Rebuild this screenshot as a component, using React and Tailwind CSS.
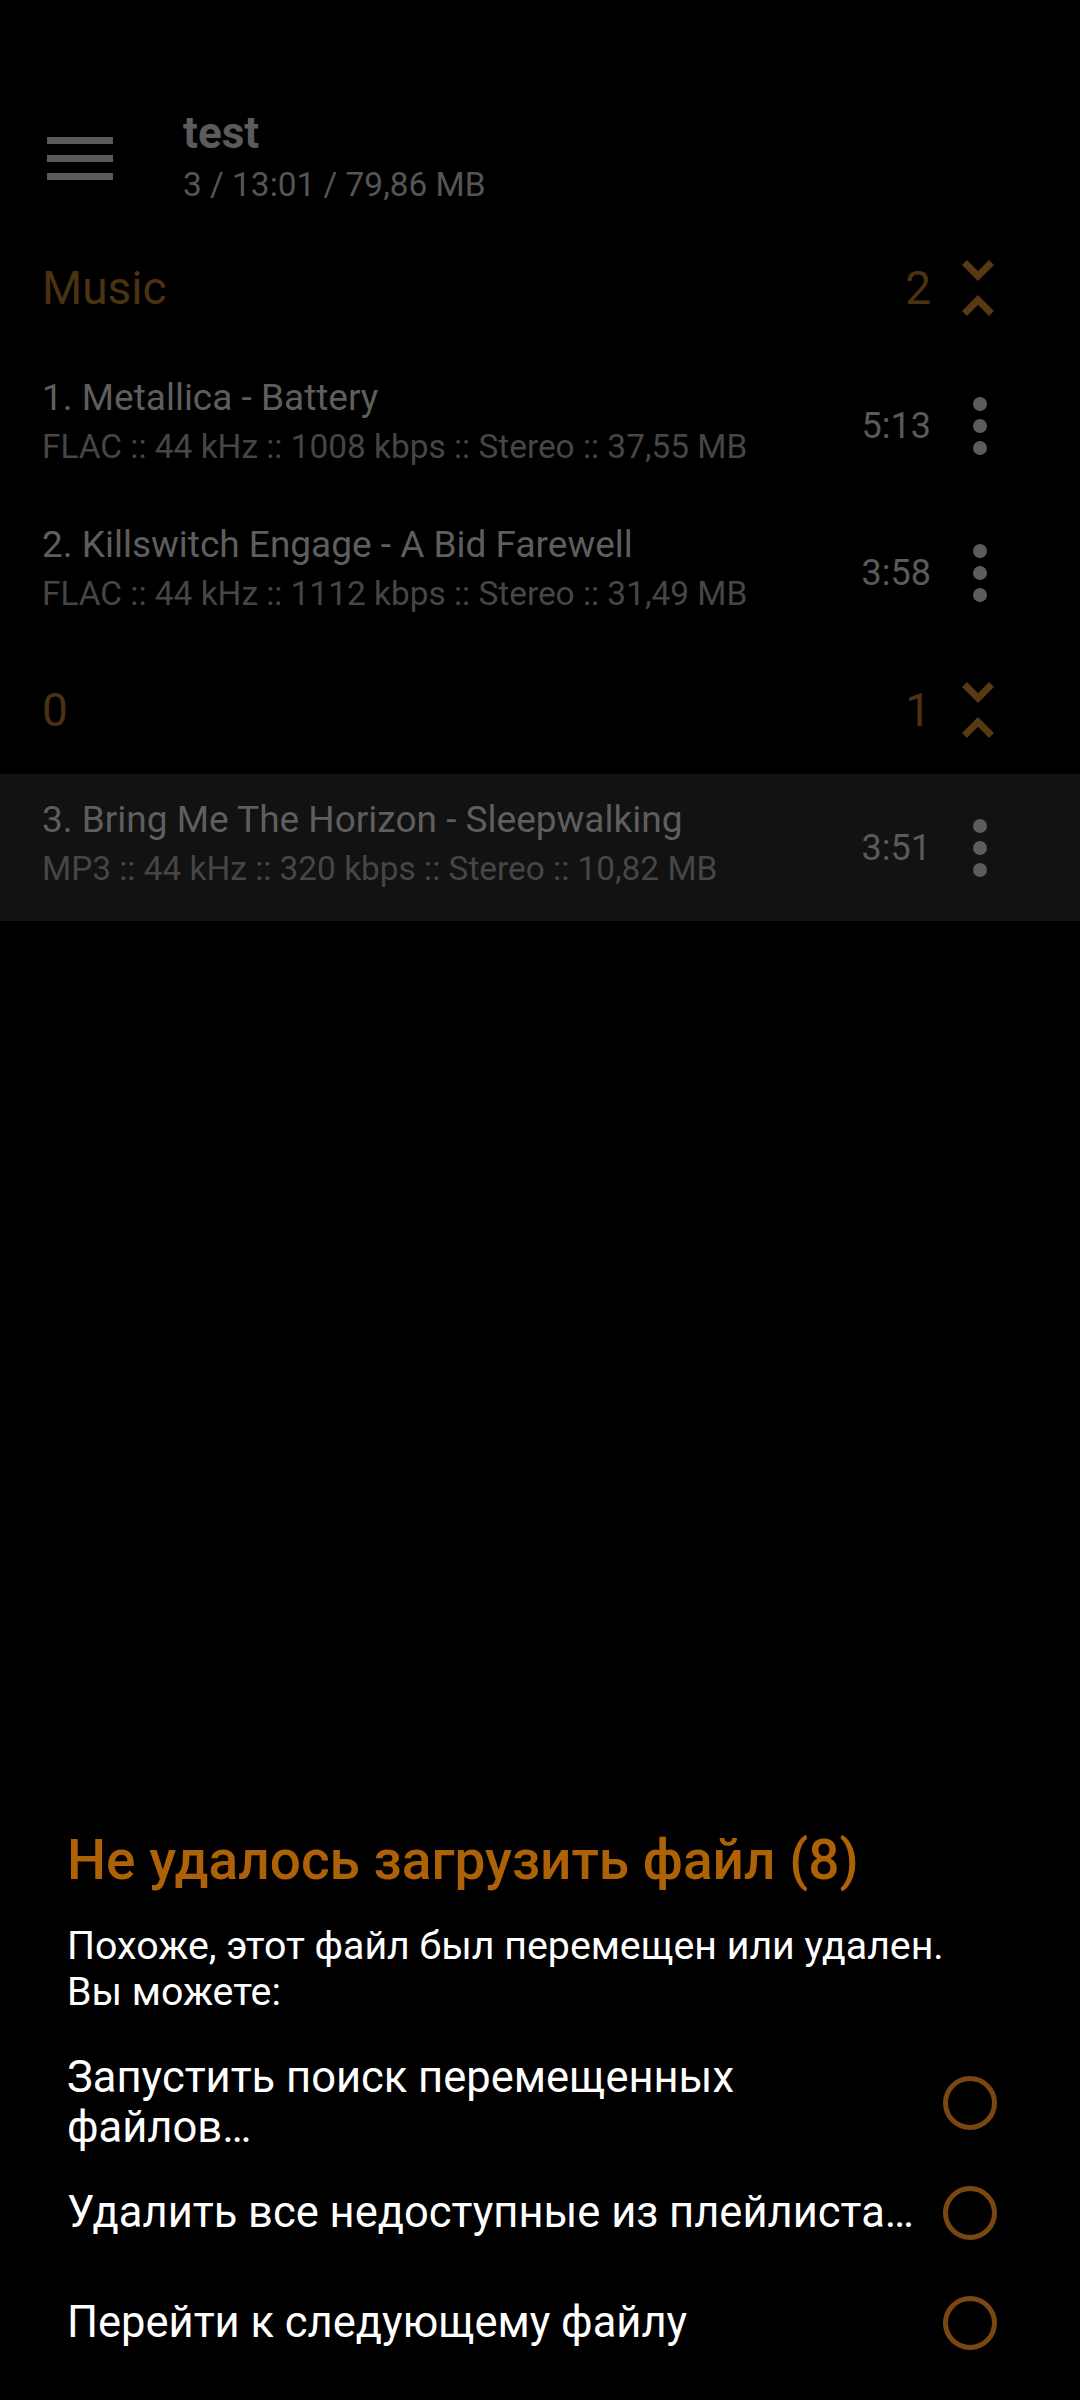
import React from "react";

const tracks = [
  { group: 0, title: "1. Metallica - Battery", info: "FLAC :: 44 kHz :: 1008 kbps :: Stereo :: 37,55 MB", time: "5:13" },
  { group: 0, title: "2. Killswitch Engage - A Bid Farewell", info: "FLAC :: 44 kHz :: 1112 kbps :: Stereo :: 31,49 MB", time: "3:58" },
  { group: 1, title: "3. Bring Me The Horizon - Sleepwalking", info: "MP3 :: 44 kHz :: 320 kbps :: Stereo :: 10,82 MB", time: "3:51", current: true },
];

const groups = [
  { name: "Music", count: 2 },
  { name: "0", count: 1 },
];

const options = [
  "Запустить поиск перемещенных файлов…",
  "Удалить все недоступные из плейлиста…",
  "Перейти к следующему файлу",
];

function UnfoldLess() {
  return (
    <svg width="32" height="56" viewBox="7.41 4 9.18 16" className="fill-[#573a12]">
      <path d="M7.41 18.59L8.83 20 12 16.83 15.17 20l1.41-1.41L12 14l-4.59 4.59zm9.18-13.18L15.17 4 12 7.17 8.83 4 7.41 5.41 12 10l4.59-4.59z" />
    </svg>
  );
}

function GroupHeader({ g }) {
  return (
    <div className="flex h-[128px] items-center pl-[42px] pr-[86px]">
      <span className="flex-1 text-[46px] leading-none text-[#4b3210]">{g.name}</span>
      <span className="text-[46px] leading-none text-[#4b3210]">{g.count}</span>
      <div className="ml-[31px]">
        <UnfoldLess />
      </div>
    </div>
  );
}

function TrackRow({ t }) {
  return (
    <div className={`flex h-[147px] pl-[42px] pr-[93px] ${t.current ? "bg-[#121212]" : ""}`}>
      <div className="flex-1 min-w-0 pt-[24px]">
        <div className="text-[37px] leading-[43px] text-[#5e5e5e] whitespace-nowrap">{t.title}</div>
        <div className="mt-[8px] text-[33.4px] leading-[40px] text-[#464646] whitespace-nowrap">{t.info}</div>
      </div>
      <div className="flex items-center">
        <span className="text-[36px] text-[#5a5a5a]">{t.time}</span>
        <div className="ml-[42px] flex flex-col gap-[8px]">
          <span className="w-[14px] h-[14px] rounded-full bg-[#5c5c5c]" />
          <span className="w-[14px] h-[14px] rounded-full bg-[#5c5c5c]" />
          <span className="w-[14px] h-[14px] rounded-full bg-[#5c5c5c]" />
        </div>
      </div>
    </div>
  );
}

export default function App() {
  return (
    <div className="w-[1080px] h-[2400px] bg-black flex flex-col overflow-hidden font-['Roboto',sans-serif]">
      {/* toolbar (dimmed behind the sheet) */}
      <div className="flex h-[224px] pt-[107px]">
        <div className="ml-[47px] mt-[30px] flex flex-col gap-[11px] w-[66px]">
          <span className="h-[7px] bg-[#5a5a5a]" />
          <span className="h-[7px] bg-[#5a5a5a]" />
          <span className="h-[7px] bg-[#5a5a5a]" />
        </div>
        <div className="ml-[70px]">
          <div className="text-[44px] leading-[52px] font-bold text-[#5b5b5b]">test</div>
          <div className="mt-[6px] text-[33.4px] leading-[40px] text-[#555555]">3 / 13:01 / 79,86 MB</div>
        </div>
      </div>

      {groups.map((g, gi) => (
        <div key={g.name}>
          <GroupHeader g={g} />
          {tracks.filter((t) => t.group === gi).map((t) => (
            <TrackRow key={t.title} t={t} />
          ))}
        </div>
      ))}

      <div className="flex-1" />

      {/* error sheet */}
      <div className="pt-[37px] pb-[22px]">
        <div className="pl-[67px] text-[55px] leading-[64px] font-medium text-[#ad6208]">Не удалось загрузить файл (8)</div>
        <div className="pl-[67px] mt-[31px] text-[39.3px] leading-[46px] text-white">
          Похоже, этот файл был перемещен или удален.
          <br />
          Вы можете:
        </div>
        <div className="mt-[33px]">
          {options.map((o) => (
            <div key={o} className="flex min-h-[110px] items-center pl-[67px] pr-[83px]">
              <div className="flex-1 pr-[22px] text-[43.5px] leading-[50px] text-white">{o}</div>
              <span className="w-[54px] h-[54px] rounded-full border-[5px] border-[#7a4710]" />
            </div>
          ))}
        </div>
      </div>
    </div>
  );
}
